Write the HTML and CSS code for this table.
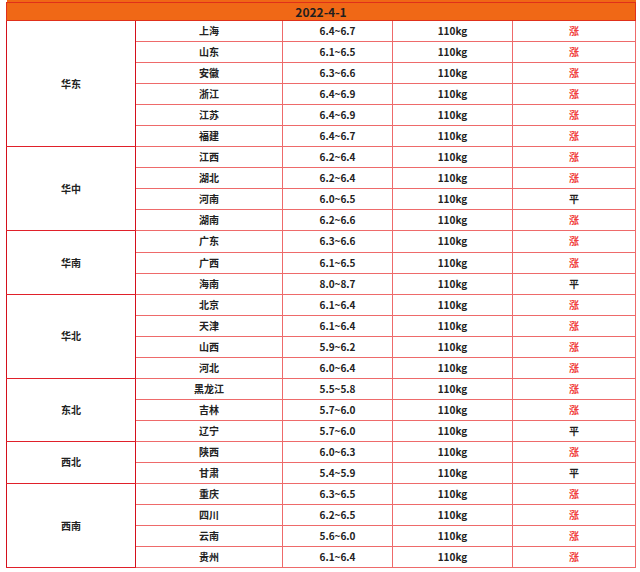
FILE: index.html
```html
<!DOCTYPE html>
<html lang="zh">
<head>
<meta charset="utf-8">
<link rel="stylesheet" href="styles.css">
</head>
<body>
<table class="price">
  <colgroup>
    <col class="c1"><col class="c2"><col class="c3"><col class="c4"><col class="c5">
  </colgroup>
  <thead>
    <tr class="top"><th colspan="5"></th></tr>
    <tr class="head"><th colspan="5">2022-4-1</th></tr>
  </thead>
  <tbody>
    <tr><td rowspan="6" class="region">华东</td><td>上海</td><td>6.4~6.7</td><td>110kg</td><td class="up">涨</td></tr>
    <tr><td>山东</td><td>6.1~6.5</td><td>110kg</td><td class="up">涨</td></tr>
    <tr class="strong"><td>安徽</td><td>6.3~6.6</td><td>110kg</td><td class="up">涨</td></tr>
    <tr><td>浙江</td><td>6.4~6.9</td><td>110kg</td><td class="up">涨</td></tr>
    <tr><td>江苏</td><td>6.4~6.9</td><td>110kg</td><td class="up">涨</td></tr>
    <tr><td>福建</td><td>6.4~6.7</td><td>110kg</td><td class="up">涨</td></tr>
    <tr class="group"><td rowspan="4" class="region">华中</td><td>江西</td><td>6.2~6.4</td><td>110kg</td><td class="up">涨</td></tr>
    <tr class="strong"><td>湖北</td><td>6.2~6.4</td><td>110kg</td><td class="up">涨</td></tr>
    <tr><td>河南</td><td>6.0~6.5</td><td>110kg</td><td class="flat">平</td></tr>
    <tr class="strong"><td>湖南</td><td>6.2~6.6</td><td>110kg</td><td class="up">涨</td></tr>
    <tr class="group"><td rowspan="3" class="region">华南</td><td>广东</td><td>6.3~6.6</td><td>110kg</td><td class="up">涨</td></tr>
    <tr><td>广西</td><td>6.1~6.5</td><td>110kg</td><td class="up">涨</td></tr>
    <tr class="strong"><td>海南</td><td>8.0~8.7</td><td>110kg</td><td class="flat">平</td></tr>
    <tr class="group"><td rowspan="4" class="region">华北</td><td>北京</td><td>6.1~6.4</td><td>110kg</td><td class="up">涨</td></tr>
    <tr><td>天津</td><td>6.1~6.4</td><td>110kg</td><td class="up">涨</td></tr>
    <tr class="strong"><td>山西</td><td>5.9~6.2</td><td>110kg</td><td class="up">涨</td></tr>
    <tr><td>河北</td><td>6.0~6.4</td><td>110kg</td><td class="up">涨</td></tr>
    <tr class="group"><td rowspan="3" class="region">东北</td><td>黑龙江</td><td>5.5~5.8</td><td>110kg</td><td class="up">涨</td></tr>
    <tr><td>吉林</td><td>5.7~6.0</td><td>110kg</td><td class="up">涨</td></tr>
    <tr class="strong"><td>辽宁</td><td>5.7~6.0</td><td>110kg</td><td class="flat">平</td></tr>
    <tr class="group"><td rowspan="2" class="region">西北</td><td>陕西</td><td>6.0~6.3</td><td>110kg</td><td class="up">涨</td></tr>
    <tr><td>甘肃</td><td>5.4~5.9</td><td>110kg</td><td class="flat">平</td></tr>
    <tr class="group"><td rowspan="4" class="region">西南</td><td>重庆</td><td>6.3~6.5</td><td>110kg</td><td class="up">涨</td></tr>
    <tr><td>四川</td><td>6.2~6.5</td><td>110kg</td><td class="up">涨</td></tr>
    <tr><td>云南</td><td>5.6~6.0</td><td>110kg</td><td class="up">涨</td></tr>
    <tr class="strong"><td>贵州</td><td>6.1~6.4</td><td>110kg</td><td class="up">涨</td></tr>
  </tbody>
</table>
</body>
</html>
```

FILE: styles.css
```css
html, body {
  margin: 0;
  padding: 0;
  background: #ffffff;
}

.price {
  margin-left: 6px;
  width: 629px;
  border-collapse: collapse;
  table-layout: fixed;
  font-family: "Noto Sans CJK SC", "Noto Sans", sans-serif;
  font-weight: 700;
  font-size: 10px;
  color: #222222;
}

.c1 { width: 129px; }
.c2 { width: 147px; }
.c3 { width: 110px; }
.c4 { width: 120px; }
.c5 { width: 123px; }

.price th,
.price td {
  border: 1px solid #ee6a6a;
  padding: 0;
  text-align: center;
  vertical-align: middle;
  line-height: 14px;
}

.top th {
  height: 2px;
  background: #f06816;
  border: none;
  border-bottom: 1px solid #e0301a;
}

.head th {
  height: 17px;
  background: #f06816;
  border-color: #e0301a;
  font-size: 12px;
  color: #1f1f1f;
}

.price tbody tr {
  height: 21.06px;
}

.price td.region {
  border-left: 1px solid #d4101c;
  border-right: 1px solid #d4101c;
  border-bottom: 1px solid #e0202a;
}

.price tr.group td {
  border-top: 1px solid #e0202a;
}

.price tr.strong td {
  border-top: 1px solid #e4202a;
}

.price td.up {
  color: #f0403c;
}

.price td.flat {
  color: #1f1f1f;
}
```
